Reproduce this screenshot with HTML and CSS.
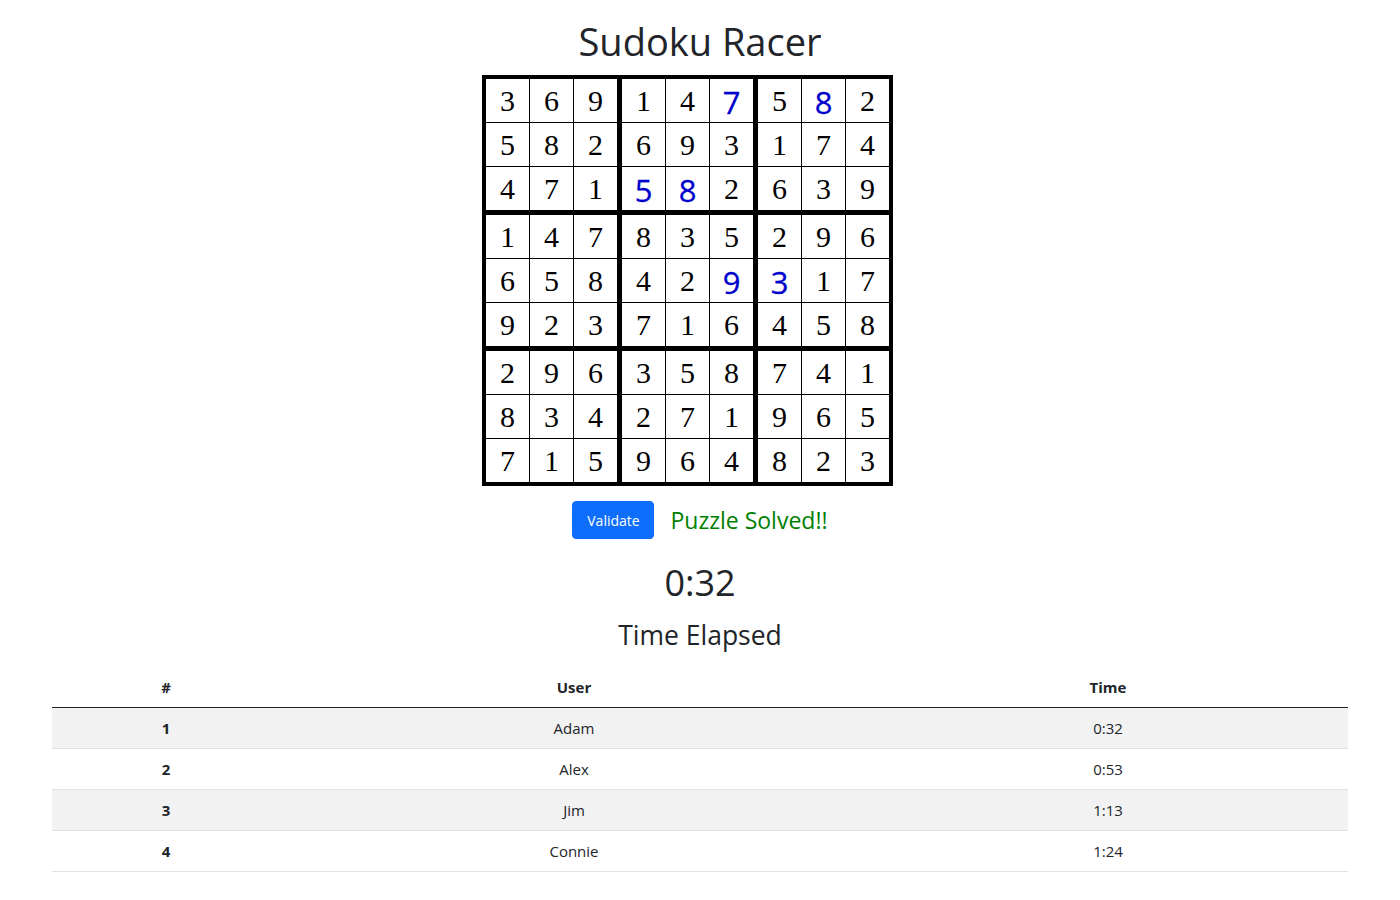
FILE: index.html
```html
<!DOCTYPE html>
<html lang="en">
<head>
<meta charset="utf-8">
<title>Sudoku Racer</title>
<link rel="stylesheet" href="styles.css">
</head>
<body>
<main class="app">
  <h1 class="title">Sudoku Racer</h1>
  <div class="board">
    <div class="box"><span class="cell">3</span><span class="cell">6</span><span class="cell">9</span><span class="cell">5</span><span class="cell">8</span><span class="cell">2</span><span class="cell">4</span><span class="cell">7</span><span class="cell">1</span></div>
    <div class="box"><span class="cell">1</span><span class="cell">4</span><span class="cell user">7</span><span class="cell">6</span><span class="cell">9</span><span class="cell">3</span><span class="cell user">5</span><span class="cell user">8</span><span class="cell">2</span></div>
    <div class="box"><span class="cell">5</span><span class="cell user">8</span><span class="cell">2</span><span class="cell">1</span><span class="cell">7</span><span class="cell">4</span><span class="cell">6</span><span class="cell">3</span><span class="cell">9</span></div>
    <div class="box"><span class="cell">1</span><span class="cell">4</span><span class="cell">7</span><span class="cell">6</span><span class="cell">5</span><span class="cell">8</span><span class="cell">9</span><span class="cell">2</span><span class="cell">3</span></div>
    <div class="box"><span class="cell">8</span><span class="cell">3</span><span class="cell">5</span><span class="cell">4</span><span class="cell">2</span><span class="cell user">9</span><span class="cell">7</span><span class="cell">1</span><span class="cell">6</span></div>
    <div class="box"><span class="cell">2</span><span class="cell">9</span><span class="cell">6</span><span class="cell user">3</span><span class="cell">1</span><span class="cell">7</span><span class="cell">4</span><span class="cell">5</span><span class="cell">8</span></div>
    <div class="box"><span class="cell">2</span><span class="cell">9</span><span class="cell">6</span><span class="cell">8</span><span class="cell">3</span><span class="cell">4</span><span class="cell">7</span><span class="cell">1</span><span class="cell">5</span></div>
    <div class="box"><span class="cell">3</span><span class="cell">5</span><span class="cell">8</span><span class="cell">2</span><span class="cell">7</span><span class="cell">1</span><span class="cell">9</span><span class="cell">6</span><span class="cell">4</span></div>
    <div class="box"><span class="cell">7</span><span class="cell">4</span><span class="cell">1</span><span class="cell">9</span><span class="cell">6</span><span class="cell">5</span><span class="cell">8</span><span class="cell">2</span><span class="cell">3</span></div>
  </div>
  <div class="actions">
    <button class="btn" type="button">Validate</button>
    <span class="status">Puzzle Solved!!</span>
  </div>
  <div class="timer">0:32</div>
  <div class="timer-label">Time Elapsed</div>
  <table class="board-table">
    <thead>
      <tr><th class="c1">#</th><th class="c2">User</th><th class="c3">Time</th></tr>
    </thead>
    <tbody>
      <tr class="odd"><th>1</th><td>Adam</td><td>0:32</td></tr>
      <tr><th>2</th><td>Alex</td><td>0:53</td></tr>
      <tr class="odd"><th>3</th><td>Jim</td><td>1:13</td></tr>
      <tr><th>4</th><td>Connie</td><td>1:24</td></tr>
    </tbody>
  </table>
</main>
</body>
</html>
```
FILE: styles.css
```css
* { box-sizing: border-box; }
html, body { margin: 0; padding: 0; background: #fff; }
body {
  font-family: "Open Sans", "Noto Sans", sans-serif;
  color: #212529;
  font-size: 15px;
}
.app {
  display: flex;
  flex-direction: column;
  align-items: center;
  padding: 0 52px;
}
.title {
  font-size: 38px;
  font-weight: 400;
  line-height: 46px;
  margin: 18px 0 11px;
  color: #212529;
}
.board {
  display: grid;
  grid-template-columns: repeat(3, auto);
  gap: 5px;
  background: #000;
  border: 4px solid #000;
  margin-right: 25px;
}
.box {
  display: grid;
  grid-template-columns: repeat(3, 43px);
  grid-auto-rows: 43px;
  gap: 1px;
  background: #000;
}
.cell {
  background: #fff;
  display: flex;
  align-items: center;
  justify-content: center;
  font-family: "Liberation Serif", "Times New Roman", serif;
  font-size: 30px;
  color: #000;
  padding-top: 1px;
}
.cell.user {
  font-family: "Open Sans", "Noto Sans", sans-serif;
  color: #0000cc;
  font-size: 31px;
  -webkit-text-stroke: 0.3px #0000cc;
  padding-top: 2px;
}
.actions {
  display: flex;
  align-items: center;
  gap: 16px;
  margin-top: 15px;
}
.btn {
  background: #0d6efd;
  color: #fff;
  border: 1px solid #0d6efd;
  border-radius: 4px;
  height: 38px;
  width: 82px;
  font-family: inherit;
  font-size: 14px;
  padding: 0;
}
.status {
  color: #008000;
  font-size: 23px;
  line-height: 30px;
}
.timer {
  font-size: 36px;
  line-height: 44px;
  margin-top: 22px;
}
.timer-label {
  font-size: 26.5px;
  line-height: 34px;
  margin-top: 13px;
}
.board-table {
  width: 100%;
  border-collapse: collapse;
  margin-top: 15px;
  font-size: 15px;
  text-align: center;
}
.board-table th, .board-table td {
  padding: 8px;
  line-height: 24px;
  border-bottom: 1px solid #dee2e6;
}
.board-table thead th {
  border-bottom: 1px solid #212529;
  font-weight: 700;
}
.board-table tbody th { font-weight: 700; }
.board-table .c1 { width: 228px; }
.board-table .c2 { width: 588px; }
.board-table .c3 { width: 480px; }
.board-table tr.odd { background: #f2f2f2; }
```
